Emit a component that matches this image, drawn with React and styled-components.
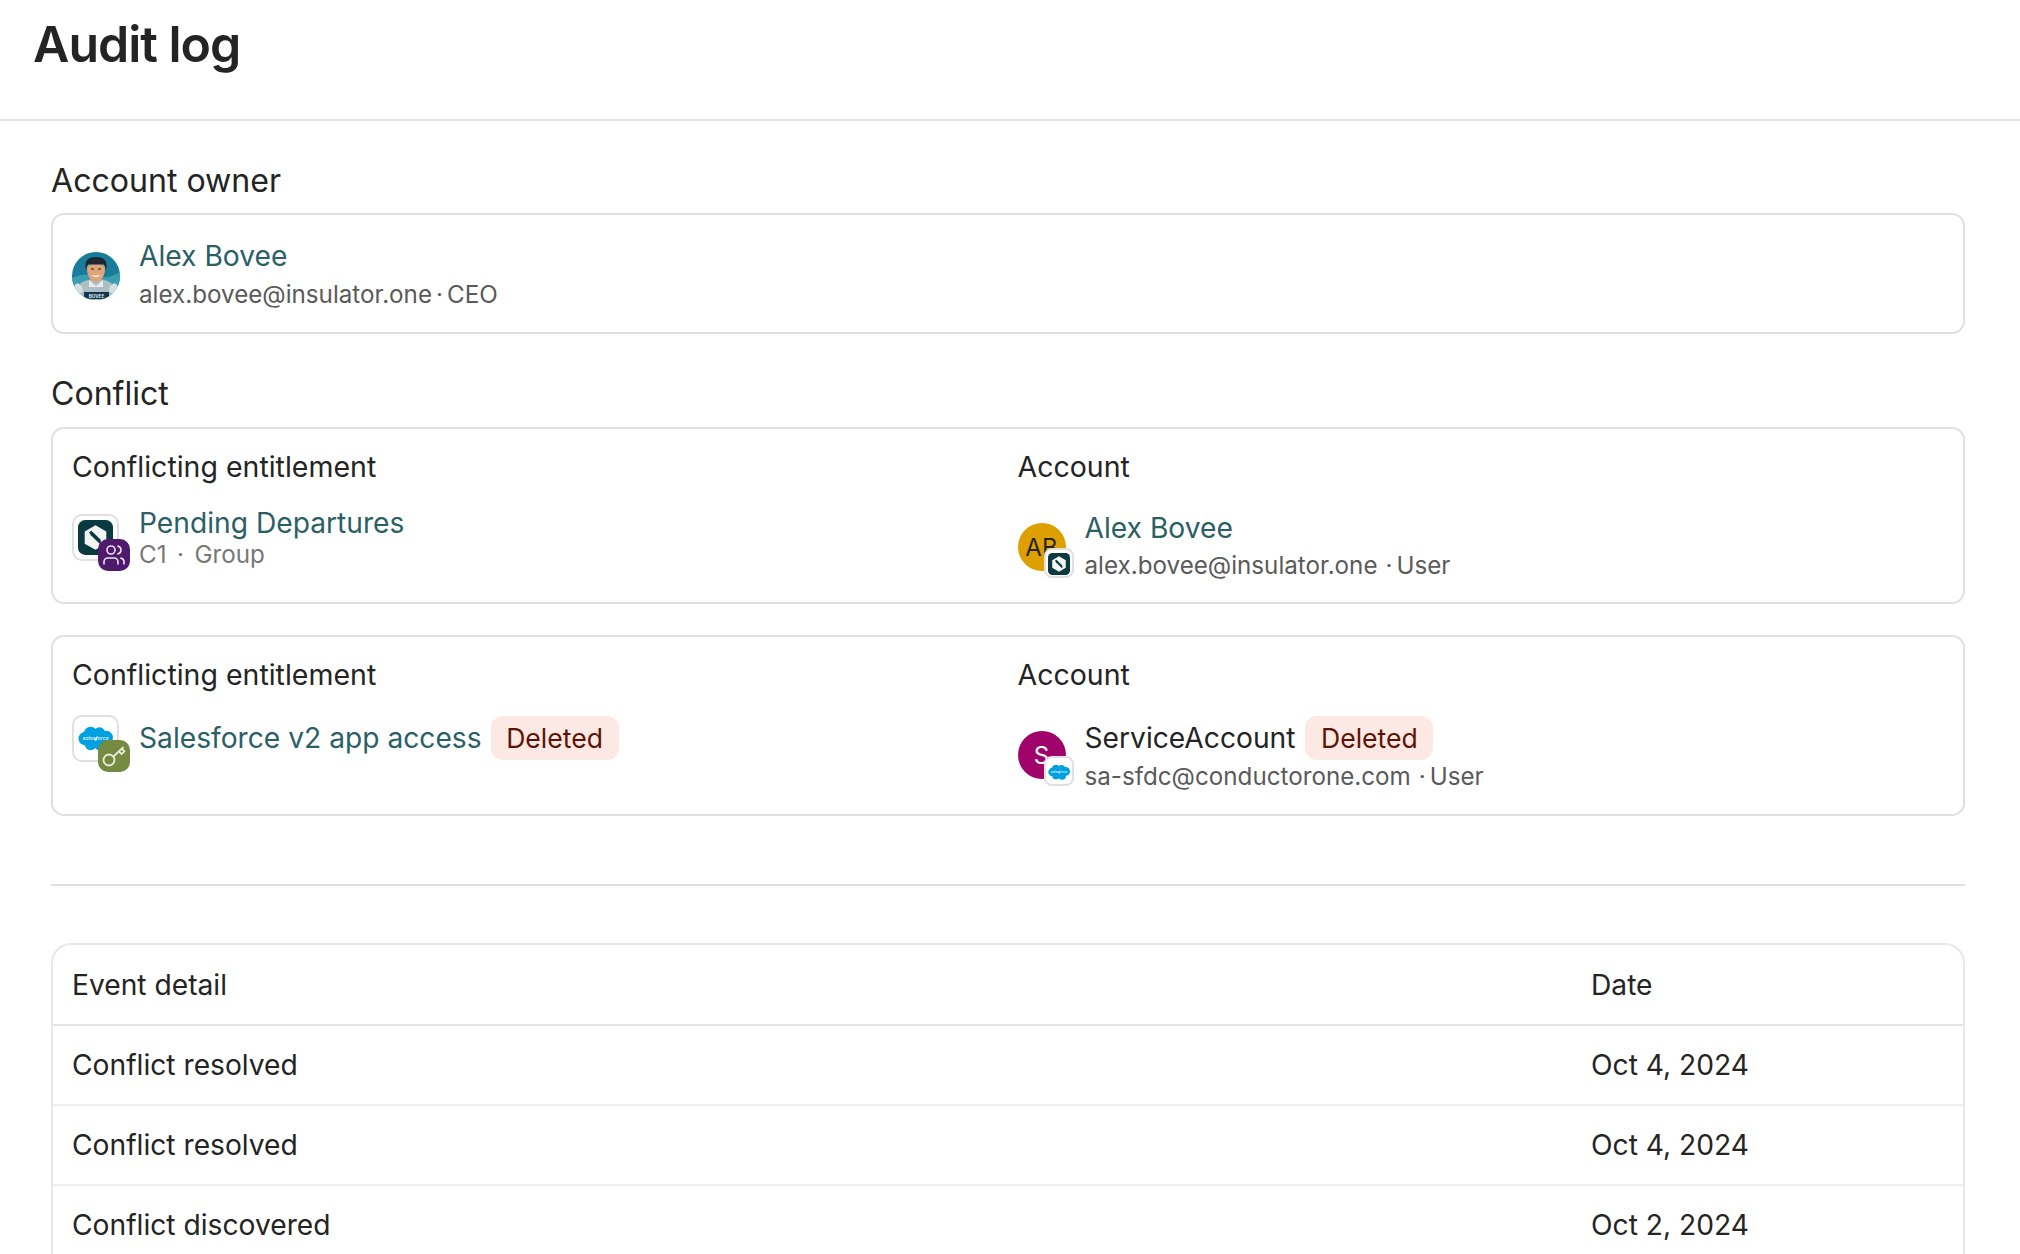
import React from "react";
import styled, { createGlobalStyle } from "styled-components";
import { Users } from "lucide-react";

const GlobalStyle = createGlobalStyle`
  html, body {
    margin: 0;
    height: 100%;
    overflow: hidden;
    background: #fff;
  }
  body {
    font-family: Inter, "Liberation Sans", sans-serif;
    color: #242424;
  }
`;

// little pictures
function C1Logo() {
  return (
    <svg viewBox="0 0 24 24" width="100%" height="100%">
      <rect width="24" height="24" rx="5" fill="#0a3a40" />
      <path d="M12 3.6l7.4 4.2v8.4L12 20.4 4.6 16.2V7.8z" fill="#f4f4f2" />
      <path d="M9.2 7.4l6.4 6.2v3.4L8.8 10.4 7.6 8.4z" fill="#0a3a40" />
    </svg>
  );
}

function SalesforceLogo() {
  return (
    <svg viewBox="0 0 36 26" width="100%" height="100%">
      <g fill="#00a1e0">
        <circle cx="13" cy="8" r="7" />
        <circle cx="22" cy="7.5" r="6" />
        <circle cx="29" cy="12" r="7" />
        <circle cx="7.5" cy="13" r="7" />
        <circle cx="13" cy="19" r="6" />
        <circle cx="23" cy="19" r="6.5" />
      </g>
      <text x="18" y="14.5" textAnchor="middle" fontSize="5.4" fontStyle="italic" fill="#fff" fontFamily="Inter, sans-serif">salesforce</text>
    </svg>
  );
}

function KeyIcon() {
  return (
    <svg viewBox="0 0 32 32" width="100%" height="100%" fill="none" stroke="#e9ecd9" strokeWidth="1.8" strokeLinecap="round">
      <circle cx="11" cy="20" r="5.5" />
      <path d="M15.5 16.5L25 7.5" />
      <path d="M21 11.5l2.6 2.6 2.8-2.8-2.6-2.6" />
    </svg>
  );
}

function OwnerPhoto() {
  return (
    <svg viewBox="0 0 48 48" width="100%" height="100%">
      <defs>
        <clipPath id="round">
          <circle cx="24" cy="24" r="24" />
        </clipPath>
      </defs>
      <g clipPath="url(#round)">
        <rect width="48" height="48" fill="#1a7b9a" />
        <path d="M0 26q12-6 24-2t24-4v14H0z" fill="#3a9db1" />
        <path d="M5 48V37q2-7 11-9l8-2 8 2q9 2 11 9v11z" fill="#aebfc4" />
        <path d="M17 28l7 6 7-6v7H17z" fill="#e6eced" />
        <path d="M5 31q-4 3-4 9l4 4 6-5q0-6-6-8zM43 31q4 3 4 9l-4 4-6-5q0-6 6-8z" fill="#d5dfe1" />
        <path d="M15 14q-1 13 9 17 10-4 9-17-9-5-18 0z" fill="#dfa477" />
        <path d="M14 18q-3-13 10-13 13 0 10 13l-2-6q-8 1-16 0z" fill="#1c2733" />
        <path d="M19 23q5 4 10 0-5 1-10 0z" fill="#fff" />
        <path d="M19 17h3M26 17h3" stroke="#1c2733" strokeWidth="1.2" />
        <rect x="12" y="40" width="25" height="7" fill="#14344f" />
        <text x="24.5" y="45.5" textAnchor="middle" fontSize="4.6" fontWeight="700" fill="#dfe7ea" fontFamily="Inter, sans-serif">BOVEE</text>
      </g>
    </svg>
  );
}

const Header = styled.header`
  height: 121px;
  padding: 18px 33px 0;
  box-sizing: border-box;
  border-bottom: 2px solid #e0e0e0;
`;

const PageTitle = styled.h1`
  margin: 0;
  font-size: 50px;
  line-height: 52px;
  font-weight: 600;
  letter-spacing: -1px;
  color: #242424;
`;

const Main = styled.main`
  padding: 40px 55px 0 51px;
`;

const SectionTitle = styled.h2`
  margin: 0 0 ${(p) => p.$mb || 12}px;
  font-size: 32.1px;
  line-height: 40px;
  font-weight: 420;
  color: #242424;
`;

const Card = styled.section`
  border: 2px solid #e0e0e0;
  border-radius: 13px;
  padding: ${(p) => p.$pad || "20px 18px 17px 19px"};
  margin-bottom: ${(p) => p.$mb ?? 31}px;
`;

const Cols = styled.div`
  display: grid;
  grid-template-columns: 1fr 1fr;
  column-gap: 18px;
`;

const ColTitle = styled.div`
  font-size: 28.5px;
  line-height: 36px;
  font-weight: 420;
  margin-bottom: ${(p) => p.$mb || 24}px;
`;

const Row = styled.div`
  display: flex;
  align-items: ${(p) => p.$align || "center"};
  gap: ${(p) => p.$gap || 19}px;
`;

const IconBox = styled.div`
  position: relative;
  flex: none;
  width: 47px;
  height: 47px;
  box-sizing: border-box;
  margin-top: ${(p) => p.$top || 0}px;
  border: 2px solid #e0e0e0;
  border-radius: 10px;
  background: #fff;
  padding: 4px;
`;

const CornerBadge = styled.div`
  position: absolute;
  right: -13px;
  bottom: -12px;
  width: 32px;
  height: 32px;
  border-radius: 10px;
  background: ${(p) => p.$bg};
  color: #ece2f2;
  display: flex;
  align-items: center;
  justify-content: center;
`;

const Avatar = styled.div`
  position: relative;
  flex: none;
  width: 48px;
  height: 48px;
  border-radius: 50%;
  background: ${(p) => p.$bg || "transparent"};
  color: ${(p) => p.$fg || "#242424"};
  font-size: 24px;
  display: flex;
  align-items: center;
  justify-content: center;
`;

const AppChip = styled.div`
  position: absolute;
  left: 26px;
  top: 25px;
  width: 30px;
  height: 30px;
  box-sizing: border-box;
  padding: 2px;
  background: #fff;
  border: 2px solid #e0e0e0;
  border-radius: 8px;
`;

const Name = styled.div`
  font-size: 28.2px;
  line-height: ${(p) => p.$lh || 38}px;
  color: ${(p) => (p.$plain ? "#242424" : "#2a5f66")};
  display: flex;
  align-items: center;
  gap: ${(p) => p.$gap || 10}px;
`;

const Sub = styled.div`
  font-size: 24.2px;
  line-height: ${(p) => p.$lh || 38}px;
  color: #5a5a5a;
`;

const Meta = styled.div`
  font-size: 24.2px;
  line-height: 35px;
  color: #777;
`;

const Sep = styled.span`
  margin: ${(p) => p.$m || "0 4px"};
`;

const Deleted = styled.span`
  display: inline-flex;
  align-items: center;
  height: 44px;
  padding: 0 15.5px;
  border-radius: 12px;
  background: #fde9e4;
  color: #5f1306;
  font-size: 26.6px;
`;

const Divider = styled.hr`
  margin: 68px 0 57px;
  border: 0;
  border-top: 2px solid #e0e0e0;
`;

const Table = styled.div`
  border: 2px solid #e8e8e8;
  border-bottom: 0;
  border-radius: 20px 20px 0 0;
`;

const TableRow = styled.div`
  display: grid;
  grid-template-columns: 1fr 372px;
  align-items: center;
  height: ${(p) => (p.$head ? 81 : 80)}px;
  box-sizing: border-box;
  padding-left: 19px;
  font-size: 28.2px;
  border-bottom: 2px solid ${(p) => (p.$head ? "#e4e4e4" : "#efefef")};
`;

const events = [
  { id: 1, detail: "Conflict resolved", date: "Oct 4, 2024" },
  { id: 2, detail: "Conflict resolved", date: "Oct 4, 2024" },
  { id: 3, detail: "Conflict discovered", date: "Oct 2, 2024" },
];

export default function App() {
  return (
    <>
      <GlobalStyle />
      <Header>
        <PageTitle>Audit log</PageTitle>
      </Header>
      <Main>
        <SectionTitle>Account owner</SectionTitle>
        <Card $pad="22px 18px 18px 19px" $mb={40}>
          <Row>
            <Avatar>
              <OwnerPhoto />
            </Avatar>
            <div>
              <Name $lh={39}>Alex Bovee</Name>
              <Sub>
                alex.bovee@insulator.one<Sep>·</Sep>CEO
              </Sub>
            </div>
          </Row>
        </Card>

        <SectionTitle $mb={13}>Conflict</SectionTitle>
        <Card>
          <Cols>
            <div>
              <ColTitle>Conflicting entitlement</ColTitle>
              <Row $align="flex-start" $gap={20}>
                <IconBox $top={5}>
                  <C1Logo />
                  <CornerBadge $bg="#4f1a6b">
                    <Users size={24} strokeWidth={1.6} />
                  </CornerBadge>
                </IconBox>
                <div>
                  <Name $lh={28}>Pending Departures</Name>
                  <Meta>
                    C1<Sep $m="0 10.5px">·</Sep>Group
                  </Meta>
                </div>
              </Row>
            </div>
            <div>
              <ColTitle>Account</ColTitle>
              <Row>
                <Avatar $bg="#dda000">
                  AB
                  <AppChip>
                    <C1Logo />
                  </AppChip>
                </Avatar>
                <div>
                  <Name>Alex Bovee</Name>
                  <Sub>
                    alex.bovee@insulator.one<Sep $m="0 4px 0 8px">·</Sep>User
                  </Sub>
                </div>
              </Row>
            </div>
          </Cols>
        </Card>

        <Card $mb={0} $pad="20px 18px 20px 19px">
          <Cols>
            <div>
              <ColTitle $mb={23}>Conflicting entitlement</ColTitle>
              <Row $align="flex-start" $gap={20}>
                <IconBox $top={-1}>
                  <SalesforceLogo />
                  <CornerBadge $bg="#738a40">
                    <KeyIcon />
                  </CornerBadge>
                </IconBox>
                <Name $lh={44} $gap={9}>
                  Salesforce v2 app access
                  <Deleted>Deleted</Deleted>
                </Name>
              </Row>
            </div>
            <div>
              <ColTitle $mb={23}>Account</ColTitle>
              <Row>
                <Avatar $bg="#a0046a" $fg="#fff">
                  S
                  <AppChip>
                    <SalesforceLogo />
                  </AppChip>
                </Avatar>
                <div>
                  <Name $plain $lh={44}>
                    ServiceAccount
                    <Deleted>Deleted</Deleted>
                  </Name>
                  <Sub $lh={34}>
                    sa-sfdc@conductorone.com<Sep $m="0 4px 0 8px">·</Sep>User
                  </Sub>
                </div>
              </Row>
            </div>
          </Cols>
        </Card>

        <Divider />

        <Table>
          <TableRow $head>
            <div>Event detail</div>
            <div>Date</div>
          </TableRow>
          {events.map((ev) => (
            <TableRow key={ev.id}>
              <div>{ev.detail}</div>
              <div>{ev.date}</div>
            </TableRow>
          ))}
        </Table>
      </Main>
    </>
  );
}
